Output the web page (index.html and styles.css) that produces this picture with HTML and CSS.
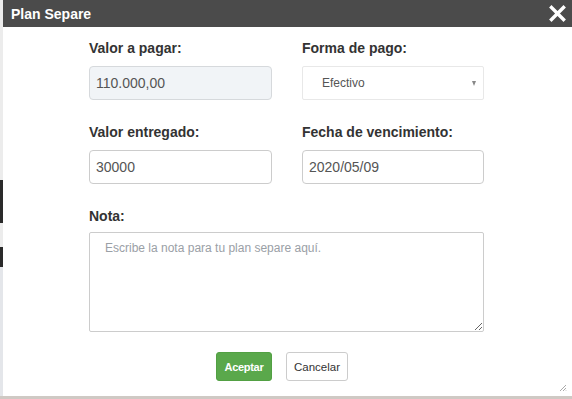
FILE: index.html
```html
<!DOCTYPE html>
<html lang="es">
<head>
    <meta charset="UTF-8">
    <meta name="viewport" content="width=device-width, initial-scale=1.0">
    <title>Plan Separe</title>
    <link rel="stylesheet" href="styles.css">
</head>
<body>
    <div class="dialog">
        <div class="titlebar">
            <span class="title">Plan Separe</span>
            <button class="close" aria-label="Cerrar">
                <svg width="17" height="17" viewBox="0 0 17 17">
                    <path d="M2.5 2.5 L14.5 14.5 M14.5 2.5 L2.5 14.5" stroke="#fff" stroke-width="3.4" stroke-linecap="square"/>
                </svg>
            </button>
        </div>

        <form class="form">
            <div class="field">
                <label>Valor a pagar:</label>
                <input class="input readonly" type="text" value="110.000,00" readonly>
            </div>
            <div class="field">
                <label>Forma de pago:</label>
                <div class="select">
                    <span>Efectivo</span>
                    <span class="arrow"></span>
                </div>
            </div>
            <div class="field">
                <label>Valor entregado:</label>
                <input class="input" type="text" value="30000">
            </div>
            <div class="field">
                <label>Fecha de vencimiento:</label>
                <input class="input" type="text" value="2020/05/09">
            </div>
            <div class="field wide">
                <label class="note-label">Nota:</label>
                <textarea class="note" placeholder="Escribe la nota para tu plan separe aquí."></textarea>
            </div>
            <div class="actions">
                <button type="button" class="btn btn-ok">Aceptar</button>
                <button type="button" class="btn btn-cancel">Cancelar</button>
            </div>
        </form>

        <svg class="grip" width="8" height="8" viewBox="0 0 8 8">
            <path d="M7 1 L1 7 M7 4 L4 7 M7 6.5 L6.5 7" stroke="#aaa" stroke-width="1"/>
        </svg>
    </div>
</body>
</html>
```

FILE: styles.css
```css
html, body {
    margin: 0;
    height: 399px;
    overflow: hidden;
}
body {
    font-family: "Liberation Sans", Arial, sans-serif;
    background: linear-gradient(to bottom, #ececec 0 180px, #2a2a2a 180px 223px, #ececec 223px 247px, #2a2a2a 247px 267px, #e4e6ea 267px 396px, #cfc9c4 396px);
}
.dialog {
    margin-left: 3px;
    height: 396px;
    background-color: #fff;
    position: relative;
}
.titlebar {
    height: 27px;
    background-color: #4b4b4b;
    display: flex;
    align-items: center;
    justify-content: space-between;
    padding: 0 6px 0 8px;
}
.title {
    color: #fff;
    font-size: 14px;
    font-weight: bold;
}
.close {
    background: none;
    border: none;
    padding: 0;
    display: flex;
    cursor: pointer;
}
.form {
    width: 395px;
    margin: 11px 0 0 86px;
    display: grid;
    grid-template-columns: 183px 182px;
    column-gap: 30px;
}
.field {
    margin-bottom: 22px;
}
.field label {
    display: block;
    font-size: 14px;
    font-weight: bold;
    line-height: 20px;
    color: #333;
    margin-bottom: 8px;
}
.input {
    box-sizing: border-box;
    width: 100%;
    height: 34px;
    padding: 0 6px;
    border: 1px solid #ccc;
    border-radius: 4px;
    font-family: inherit;
    font-size: 14px;
    color: #555;
    outline: none;
}
.readonly {
    background-color: #f1f4f7;
    border-color: #d6d9dc;
}
.select {
    box-sizing: border-box;
    height: 34px;
    border: 1px solid #e8e8e8;
    border-radius: 2px;
    display: flex;
    align-items: center;
    justify-content: space-between;
    padding: 0 7px 0 19px;
    font-size: 12px;
    color: #555;
}
.arrow {
    width: 0;
    height: 0;
    margin-top: 1px;
    border-left: 2.5px solid transparent;
    border-right: 2.5px solid transparent;
    border-top: 5px solid #888;
}
.wide {
    grid-column: span 2;
    margin-bottom: 20px;
}
.field .note-label {
    margin-bottom: 6px;
}
.note {
    box-sizing: border-box;
    display: block;
    width: 100%;
    height: 100px;
    padding: 8px 15px;
    border: 1px solid #ccc;
    border-radius: 2px;
    font-family: inherit;
    font-size: 12px;
    outline: none;
}
.note::placeholder {
    color: #9aa0a6;
}
.actions {
    grid-column: span 2;
    display: flex;
    justify-content: center;
    gap: 14px;
    padding-right: 9px;
}
.btn {
    height: 29px;
    border-radius: 3px;
    font-family: inherit;
    font-size: 12px;
    cursor: pointer;
}
.btn-ok {
    width: 56px;
    background-color: #5aa84b;
    border: 1px solid #52a043;
    color: #fff;
    font-weight: bold;
    font-size: 11px;
    letter-spacing: -0.3px;
}
.btn-cancel {
    width: 62px;
    background-color: #fff;
    border: 1px solid #ccc;
    color: #333;
    font-size: 11.5px;
}
.grip {
    position: absolute;
    right: 5px;
    bottom: 4px;
}
```
